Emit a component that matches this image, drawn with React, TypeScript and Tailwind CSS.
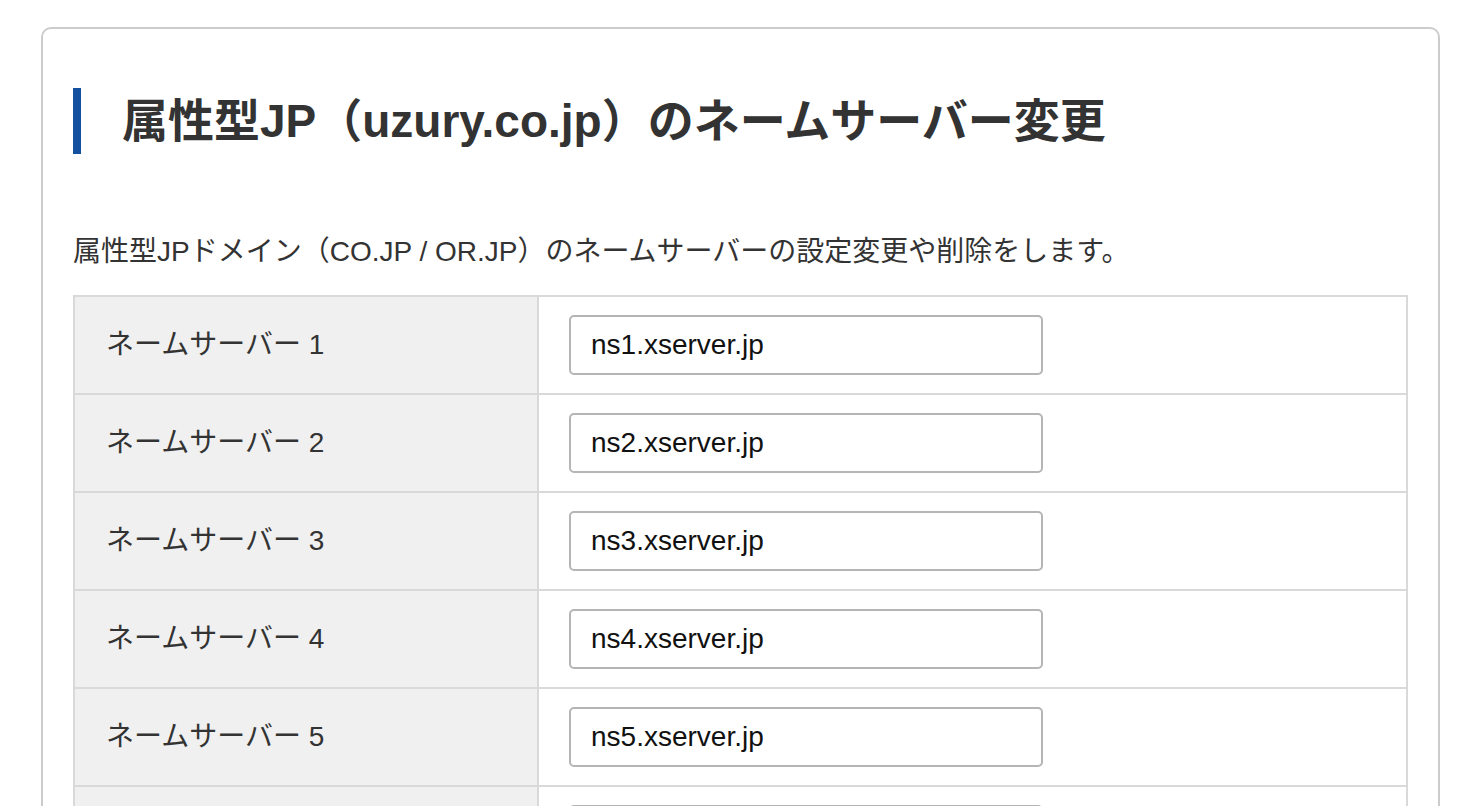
import React from "react";

const rows = [
  { label: "ネームサーバー 1", value: "ns1.xserver.jp" },
  { label: "ネームサーバー 2", value: "ns2.xserver.jp" },
  { label: "ネームサーバー 3", value: "ns3.xserver.jp" },
  { label: "ネームサーバー 4", value: "ns4.xserver.jp" },
  { label: "ネームサーバー 5", value: "ns5.xserver.jp" },
  { label: "ネームサーバー 6", value: "" },
];

export default function App() {
  return (
    <div
      className="min-h-screen bg-white pl-[41px] pr-[40px] pt-[27px] pb-10 text-[#333]"
      style={{ fontFamily: '"Liberation Sans", "Noto Sans CJK JP", sans-serif' }}
    >
      <div className="rounded-[10px] border-2 border-[#cccccc] bg-white px-[30px] pt-[59px] pb-10">
        <h1 className="flex h-[66px] items-center border-l-[8px] border-[#1450a0] pl-[41px] text-[46px] font-bold leading-none text-[#333]">
          属性型JP（uzury.co.jp）のネームサーバー変更
        </h1>
        <p className="mt-[77px] mb-[22px] text-[28px] leading-[42px] text-[#333]">
          属性型JPドメイン（CO.JP / OR.JP）のネームサーバーの設定変更や削除をします。
        </p>
        <div className="border-2 border-b-0 border-[#d9d9d9]">
          {rows.map((r) => (
            <div key={r.label} className="flex h-[98px] border-b-2 border-[#d9d9d9]">
              <div className="flex w-[464px] shrink-0 items-center border-r-2 border-[#d9d9d9] bg-[#f0f0f0] pl-[31px] text-[28px] text-[#333]">
                {r.label}
              </div>
              <div className="flex flex-1 items-center pl-[30px]">
                <div className="flex h-[60px] w-[474px] items-center rounded-[5px] border-2 border-[#b5b5b5] bg-white pl-[20px] text-[28px] text-[#111]">
                  {r.value}
                </div>
              </div>
            </div>
          ))}
        </div>
      </div>
    </div>
  );
}
